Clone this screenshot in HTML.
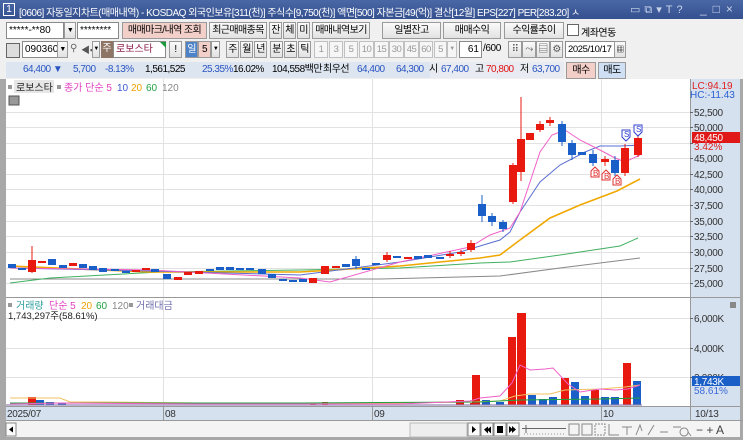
<!DOCTYPE html>
<html><head><meta charset="utf-8"><style>
*{margin:0;padding:0;box-sizing:border-box}
body{width:743px;height:440px;overflow:hidden;background:#f0f0f0;font-family:"Liberation Sans","Noto Sans CJK KR",sans-serif;font-size:10px;color:#000;position:relative}
.a{position:absolute;white-space:nowrap}
.b{position:absolute;height:17px;border:1px solid #9a9a9a;background:linear-gradient(#fafafa,#e2e2e2);text-align:center;line-height:15px;font-size:10px;letter-spacing:-0.6px;white-space:nowrap;overflow:hidden}
.x{position:absolute;height:17px;border:1px solid #8a8a8a;background:#fff;line-height:15px;font-size:10px;padding-left:2px;white-space:nowrap;overflow:hidden}
.s{position:absolute;height:17px;border:1px solid #c0c0c0;background:#f6f6f6;color:#999;text-align:center;line-height:15px;font-size:9.5px;letter-spacing:-0.5px}
.i{position:absolute;top:64px;height:12px;line-height:12px;white-space:nowrap;font-size:10px;letter-spacing:-0.5px}
</style></head><body>
<div class="a" style="left:0;top:0;width:743px;height:19px;background:linear-gradient(#4a67a6,#34508f)"></div>
<div class="a" style="left:3px;top:3px;width:12px;height:13px;border:1px solid #fff;color:#fff;font-size:10px;line-height:11px;text-align:center">1</div>
<div class="a" style="left:19px;top:4px;color:#fff;font-size:10px;letter-spacing:-0.5px">[0606] 자동일지차트(매매내역) - KOSDAQ 외국인보유[311(천)] 주식수[9,750(천)] 액면[500] 자본금[49(억)] 결산[12월] EPS[227] PER[283.20] ㅅ</div>
<div class="a" style="left:630px;top:3px;color:#c8d4ec;font-size:11px;letter-spacing:4px">▭⧉▾T?</div>
<div class="a" style="left:700px;top:2px;color:#c8d4ec;font-size:12px;letter-spacing:6px">_□×</div>

<div class="x" style="left:6px;top:22px;width:58px">*****-**80</div>
<div class="b" style="left:64px;top:22px;width:12px;font-size:7px">▼</div>
<div class="x" style="left:77px;top:22px;width:42px">********</div>
<div class="b" style="left:122px;top:22px;width:85px;background:#f2cfc9">매매마크/내역 조회</div>
<div class="b" style="left:209px;top:22px;width:58px">최근매매종목</div>
<div class="b" style="left:269px;top:22px;width:13px">잔</div>
<div class="b" style="left:283px;top:22px;width:13px">체</div>
<div class="b" style="left:297px;top:22px;width:13px">미</div>
<div class="b" style="left:312px;top:22px;width:58px">매매내역보기</div>
<div class="b" style="left:382px;top:22px;width:59px">일별잔고</div>
<div class="b" style="left:443px;top:22px;width:58px">매매수익</div>
<div class="b" style="left:504px;top:22px;width:60px">수익률추이</div>
<div class="a" style="left:567px;top:24px;width:12px;height:12px;border:1px solid #666;background:#fff"></div>
<div class="a" style="left:581px;top:24px;letter-spacing:-0.5px">계좌연동</div>

<div class="a" style="left:6px;top:43px;width:14px;height:15px;border:1px solid #666;background:#ddd"></div>
<div class="x" style="left:22px;top:41px;width:36px">090360</div>
<div class="b" style="left:57px;top:41px;width:11px;font-size:7px">▼</div>
<div class="a" style="left:70px;top:43px;color:#666;font-size:10px">⚲</div>
<div class="a" style="left:81px;top:43px;color:#555;font-size:9px">◀▪</div>
<div class="b" style="left:92px;top:41px;width:8px;font-size:6px">▼</div>
<div class="a" style="left:101px;top:41px;width:12px;height:17px;background:#8e7465;color:#fff;text-align:center;line-height:16px">주</div>
<div class="x" style="left:113px;top:41px;width:53px;color:#8b1c4a">로보스타</div>
<div class="a" style="left:160px;top:42px;width:0;height:0;border-top:6px solid #1a9a3a;border-left:6px solid transparent"></div>
<div class="b" style="left:169px;top:41px;width:13px">!</div>
<div class="b" style="left:185px;top:41px;width:13px;background:#4c82c8;color:#fff">일</div>
<div class="b" style="left:198px;top:41px;width:13px;background:#f2cfc9">5</div>
<div class="b" style="left:211px;top:41px;width:9px;font-size:6px">▼</div>
<div class="b" style="left:226px;top:41px;width:13px">주</div>
<div class="b" style="left:240px;top:41px;width:13px">월</div>
<div class="b" style="left:254px;top:41px;width:13px">년</div>
<div class="b" style="left:270px;top:41px;width:13px">분</div>
<div class="b" style="left:284px;top:41px;width:13px">초</div>
<div class="b" style="left:298px;top:41px;width:13px">틱</div>
<div class="s" style="left:314px;top:41px;width:14px">1</div>
<div class="s" style="left:329px;top:41px;width:14px">3</div>
<div class="s" style="left:344px;top:41px;width:14px">5</div>
<div class="s" style="left:359px;top:41px;width:15px">10</div>
<div class="s" style="left:374px;top:41px;width:15px">15</div>
<div class="s" style="left:389px;top:41px;width:15px">30</div>
<div class="s" style="left:404px;top:41px;width:15px">45</div>
<div class="s" style="left:419px;top:41px;width:14px">60</div>
<div class="s" style="left:434px;top:41px;width:13px">5</div>
<div class="s" style="left:447px;top:41px;width:10px;font-size:6px">▼</div>
<div class="x" style="left:459px;top:41px;width:23px;text-align:right;padding-right:2px">61</div>
<div class="a" style="left:483px;top:43px;letter-spacing:-0.4px">/600</div>
<div class="b" style="left:508px;top:41px;width:14px;color:#555">⠿</div>
<div class="b" style="left:522px;top:41px;width:14px;color:#555">⤳</div>
<div class="b" style="left:536px;top:41px;width:14px;color:#555">▤</div>
<div class="b" style="left:550px;top:41px;width:13px;color:#555">⚙</div>
<div class="x" style="left:565px;top:41px;width:50px;font-size:9.5px;letter-spacing:-0.4px">2025/10/17</div>
<div class="b" style="left:614px;top:41px;width:12px;font-size:8px">▦</div>

<div class="a" style="left:6px;top:62px;width:424px;height:16px;background:#dde5f0"></div>
<div class="a" style="left:430px;top:62px;width:134px;height:16px;background:#e8ecf2"></div>
<div class="i" style="left:23px;color:#2a55c0">64,400 ▼</div>
<div class="i" style="left:73px;color:#2a55c0">5,700</div>
<div class="i" style="left:105px;color:#2a55c0">-8.13%</div>
<div class="i" style="left:145px">1,561,525</div>
<div class="i" style="left:202px;color:#2a55c0">25.35%</div>
<div class="i" style="left:233px">16.02%</div>
<div class="i" style="left:272px">104,558백만</div>
<div class="i" style="left:323px">최우선</div>
<div class="i" style="left:357px;color:#2a55c0">64,400</div>
<div class="i" style="left:396px;color:#2a55c0">64,300</div>
<div class="i" style="left:429px">시</div>
<div class="i" style="left:441px;color:#2a55c0">67,400</div>
<div class="i" style="left:475px">고</div>
<div class="i" style="left:486px;color:#e01010">70,800</div>
<div class="i" style="left:520px">저</div>
<div class="i" style="left:532px;color:#2a55c0">63,700</div>
<div class="b" style="left:566px;top:62px;width:30px;background:#f2cfc9">매수</div>
<div class="b" style="left:598px;top:62px;width:28px;background:#cfe0f5">매도</div>

<svg class="a" style="left:0;top:79px" width="743" height="361" viewBox="0 79 743 361" font-family="Liberation Sans, Noto Sans CJK KR, sans-serif" font-size="10">
<rect x="0" y="79" width="6" height="361" fill="#a8a8a8"/>
<rect x="6" y="79" width="684" height="327" fill="#fff"/>
<rect x="690" y="79" width="50" height="327" fill="#d6e1ef"/>
<rect x="740" y="79" width="3" height="361" fill="#a8a8a8"/>
<g stroke="#e2e2e2" stroke-width="1">
<path d="M6 112.5H690M6 127.5H690M6 143.5H690M6 158.5H690M6 174.5H690M6 189.5H690M6 205.5H690M6 221.5H690M6 236.5H690M6 252.5H690M6 268.5H690M6 283.5H690M6 318.5H690M6 348.5H690M6 377.5H690"/>
<path d="M163.5 79V406M372.5 79V406M601.5 79V406"/>
</g>
<path d="M6 297.5H740" stroke="#999"/>
<path d="M690.5 79V420" stroke="#999"/>
<rect x="8" y="85" width="4" height="4" fill="#999"/>
<rect x="14" y="80" width="40" height="13" fill="#e6e6e6"/>
<text x="16" y="91" fill="#222">로보스타</text>
<rect x="57" y="85" width="4" height="4" fill="#999"/>
<text x="64" y="91" fill="#e040c0">종가 단순 5</text>
<text x="117" y="91" fill="#3a5ad0">10</text>
<text x="131" y="91" fill="#f0a000">20</text>
<text x="146" y="91" fill="#20a040">60</text>
<text x="162" y="91" fill="#888">120</text>
<rect x="9" y="96" width="10" height="9" fill="#999" stroke="#555"/>
<g fill="none" stroke-width="1">
<polyline stroke="#888" points="10,279 330,279 380,279 500,276 560,268 640,258"/>
<polyline stroke="#40b060" points="10,283 50,278 160,272 300,270 400,268 480,263 510,262 560,255 620,246 638,238"/>
<polyline stroke="#f0a800" stroke-width="1.6" points="10,266 150,272 300,272 400,266 480,258 500,255 520,240 550,218 580,205 617,191 640,179"/>
<polyline stroke="#5a6ed0" points="10,268 150,271 300,275 400,262 460,252 500,240 510,232 520,212 540,182 560,165 585,152 600,146 620,146 640,145"/>
<polyline stroke="#f060c8" points="10,268 150,270 300,278 330,282 400,262 470,247 490,235 510,228 520,212 530,182 540,152 552,135 565,130 580,140 600,150 615,158 625,162 640,155"/>
</g>
<g stroke-width="1">
<path stroke="#e8190f" d="M32 246V273M521 97V181M513 163V204M471 240V252M625 144V176M638 136V157M550 117V126M540 121V132M605 156V166M387 252V262M461 250V256M450 251V258"/>
<path stroke="#1a5fc8" d="M482 195V222M562 121V146M572 140V160M593 150V166M615 156V176M356 256V269M492 213V226M503 220V232"/>
</g>
<g fill="#e8190f">
<rect x="28" y="260" width="8" height="12"/><rect x="38" y="261" width="8" height="2"/><rect x="69" y="263" width="8" height="3"/>
<rect x="132" y="270" width="8" height="2"/><rect x="142" y="268" width="8" height="2"/><rect x="174" y="277" width="8" height="3"/>
<rect x="184" y="272" width="8" height="3"/><rect x="195" y="271" width="8" height="3"/><rect x="309" y="278" width="8" height="5"/>
<rect x="321" y="266" width="8" height="8"/><rect x="332" y="266" width="8" height="2"/><rect x="383" y="255" width="8" height="5"/>
<rect x="404" y="257" width="8" height="2"/><rect x="446" y="254" width="8" height="2"/><rect x="457" y="252" width="8" height="2"/>
<rect x="467" y="243" width="8" height="7"/><rect x="509" y="165" width="8" height="37"/><rect x="517" y="139" width="8" height="33"/>
<rect x="526" y="133" width="8" height="7"/><rect x="536" y="124" width="8" height="6"/><rect x="546" y="120" width="8" height="3"/>
<rect x="601" y="159" width="8" height="3"/><rect x="621" y="148" width="8" height="25"/><rect x="634" y="138" width="8" height="17"/>
</g>
<g fill="#1a5fc8">
<rect x="8" y="264" width="8" height="4"/><rect x="18" y="268" width="8" height="2"/><rect x="48" y="259" width="8" height="6"/>
<rect x="59" y="265" width="8" height="3"/><rect x="79" y="264" width="8" height="4"/><rect x="89" y="266" width="8" height="4"/>
<rect x="99" y="268" width="8" height="4"/><rect x="111" y="269" width="8" height="2"/><rect x="122" y="271" width="8" height="2"/>
<rect x="151" y="269" width="8" height="3"/><rect x="163" y="274" width="8" height="5"/><rect x="206" y="269" width="8" height="2"/>
<rect x="216" y="267" width="8" height="3"/><rect x="226" y="267" width="8" height="3"/><rect x="236" y="268" width="8" height="2"/>
<rect x="246" y="268" width="8" height="2"/><rect x="258" y="269" width="8" height="5"/><rect x="268" y="274" width="8" height="4"/>
<rect x="279" y="279" width="8" height="2"/><rect x="289" y="280" width="8" height="2"/><rect x="299" y="279" width="8" height="3"/>
<rect x="342" y="264" width="8" height="3"/><rect x="352" y="259" width="8" height="7"/><rect x="362" y="268" width="8" height="2"/>
<rect x="372" y="263" width="8" height="2"/><rect x="393" y="256" width="8" height="2"/><rect x="414" y="256" width="8" height="3"/>
<rect x="424" y="255" width="8" height="3"/><rect x="436" y="257" width="8" height="2"/><rect x="478" y="204" width="8" height="12"/>
<rect x="488" y="216" width="8" height="6"/><rect x="499" y="222" width="8" height="7"/><rect x="558" y="124" width="8" height="18"/>
<rect x="568" y="143" width="8" height="12"/><rect x="578" y="152" width="8" height="3"/><rect x="589" y="154" width="8" height="9"/>
<rect x="611" y="160" width="8" height="13"/>
</g>
<g fill="#fff" stroke="#e03030">
<path d="M591 171l4-4 4 4v6h-8z"/><path d="M602 174l4-4 4 4v6h-8z"/><path d="M613 179l4-4 4 4v6h-8z"/>
</g>
<g fill="#e03030" font-size="8"><text x="593" y="176">B</text><text x="604" y="179">B</text><text x="615" y="184">B</text></g>
<g fill="#fff" stroke="#3040d0"><path d="M622 130h8v7l-4 4-4-4z"/><path d="M634 125h8v7l-4 4-4-4z"/></g>
<g fill="#3040d0" font-size="8"><text x="624" y="137">S</text><text x="636" y="132">S</text></g>
<text x="692" y="89" fill="#e02020">LC:94.19</text>
<text x="690" y="98" fill="#2a60d0">HC:-11.43</text>
<g stroke="#666"><path d="M690 112.5h3M690 127.5h3M690 143.5h3M690 158.5h3M690 174.5h3M690 189.5h3M690 205.5h3M690 221.5h3M690 236.5h3M690 252.5h3M690 268.5h3M690 283.5h3M690 318.5h3M690 348.5h3M690 377.5h3"/></g>
<g fill="#333" font-size="10" letter-spacing="-0.3">
<text x="694" y="116">52,500</text><text x="694" y="131">50,000</text><text x="694" y="162">45,000</text>
<text x="694" y="178">42,500</text><text x="694" y="193">40,000</text><text x="694" y="209">37,500</text><text x="694" y="225">35,000</text>
<text x="694" y="240">32,500</text><text x="694" y="256">30,000</text><text x="694" y="272">27,500</text><text x="694" y="287">25,000</text>
<text x="694" y="322">6,000K</text><text x="694" y="352">4,000K</text><text x="694" y="381">2,000K</text>
</g>
<rect x="692" y="132" width="48" height="11" fill="#e01818"/>
<text x="694" y="141" fill="#fff" letter-spacing="-0.3">48,450</text>
<text x="694" y="150" fill="#e02020">3.42%</text>
<rect x="692" y="376" width="48" height="10" fill="#1a5fc8"/>
<text x="694" y="385" fill="#fff" letter-spacing="-0.3">1,743K</text>
<text x="694" y="394" fill="#3a6ad8">58.61%</text>
<rect x="730" y="302" width="6" height="6" fill="#888"/>
<rect x="8" y="303" width="4" height="4" fill="#999"/>
<text x="16" y="309" fill="#30a0a0">거래량</text>
<text x="49" y="309" fill="#e040c0">단순 5</text>
<text x="81" y="309" fill="#f0a000">20</text>
<text x="96" y="309" fill="#20a040">60</text>
<text x="112" y="309" fill="#888">120</text>
<rect x="129" y="303" width="4" height="4" fill="#999"/>
<text x="136" y="309" fill="#7070b0">거래대금</text>
<text x="8" y="319" fill="#222" font-size="9.5">1,743,297주(58.61%)</text>
<g fill="#e8190f">
<rect x="28" y="397" width="8" height="8"/><rect x="456" y="400" width="8" height="5"/><rect x="472" y="375" width="8" height="30"/>
<rect x="508" y="337" width="8" height="68"/><rect x="517" y="313" width="9" height="92"/><rect x="561" y="378" width="8" height="27"/>
<rect x="591" y="390" width="8" height="15"/><rect x="623" y="363" width="8" height="42"/>
<rect x="310" y="403" width="6" height="2"/><rect x="322" y="402" width="6" height="3"/><rect x="470" y="403" width="6" height="2"/>
</g>
<g fill="#1a5fc8">
<rect x="36" y="400" width="8" height="5"/><rect x="46" y="402" width="8" height="3"/><rect x="58" y="403" width="8" height="2"/>
<rect x="482" y="400" width="8" height="5"/><rect x="496" y="402" width="8" height="3"/><rect x="528" y="395" width="8" height="10"/>
<rect x="539" y="399" width="8" height="6"/><rect x="549" y="397" width="8" height="8"/><rect x="571" y="382" width="8" height="23"/>
<rect x="581" y="396" width="8" height="9"/><rect x="601" y="397" width="8" height="8"/><rect x="611" y="397" width="8" height="8"/>
<rect x="633" y="381" width="8" height="24"/>
</g>
<rect x="6" y="404" width="636" height="2" fill="#9080b0" opacity="0.6"/>
<g fill="none">
<polyline stroke="#f0c060" points="10,398 60,398 70,402 100,402 200,403 400,403 470,402 500,401 515,396 530,394 550,394 565,390 600,389 625,387 640,385"/>
<polyline stroke="#20a040" points="10,403 300,403 480,402 520,400 600,399 640,398"/>
<polyline stroke="#f060c8" points="10,404 60,403 200,404 400,404 470,401 480,398 500,396 512,383 520,365 530,370 545,369 553,368 568,384 580,392 600,389 615,390 628,389 640,385"/>
</g>
<rect x="6" y="406" width="734" height="14" fill="#d6e1ef"/>
<path d="M6 406.5H740M6 420.5H743" stroke="#999"/>
<path d="M163.5 406V420M372.5 406V420M601.5 406V420M690.5 406V420" stroke="#999"/>
<g fill="#333" font-size="10" letter-spacing="-0.3"><text x="7" y="417">2025/07</text><text x="165" y="417">08</text><text x="374" y="417">09</text><text x="603" y="417">10</text><text x="695" y="417">10/13</text></g>
<rect x="6" y="421" width="734" height="16" fill="#f4f4f4"/>
<rect x="0" y="437" width="743" height="3" fill="#a8a8a8"/>
<rect x="6" y="423" width="10" height="13" fill="#fafafa" stroke="#888"/><path d="M9 429.5l4-3v6z" fill="#000"/>
<rect x="410" y="423" width="57" height="14" fill="#eee" stroke="#bbb"/>
<g fill="#fafafa" stroke="#888"><rect x="468" y="423" width="12" height="13"/><rect x="481" y="423" width="12" height="13"/><rect x="494" y="423" width="12" height="13"/><rect x="507" y="423" width="12" height="13"/></g>
<g fill="#000"><path d="M472 426l4 3.5-4 3.5z"/><path d="M484 429.5l4-3v7zM487 429.5l4-3v7z"/><rect x="497" y="426" width="6" height="7"/><path d="M509 426l4 3.5-4 3.5zM512 426l4 3.5-4 3.5z"/></g>
<path d="M522 428.5H566M526 425V433" stroke="#666"/><path d="M524 434h42" stroke="#999" stroke-dasharray="1 2"/>
<g fill="none" stroke="#888"><rect x="569" y="424" width="10" height="11"/><rect x="582" y="424" width="10" height="11"/><rect x="595" y="424" width="10" height="11" stroke-dasharray="2 1"/>
<path d="M609 424v11h10M622 427h10M627 427v8M636 435l4-10 2 6M648 435l6-10M660 432h8M673 427h8M684 428a4 4 0 1 0 .1 0M688 432l3 4"/></g>
<text x="696" y="434" fill="#444" font-size="12">− + A</text>
</svg>
</body></html>
